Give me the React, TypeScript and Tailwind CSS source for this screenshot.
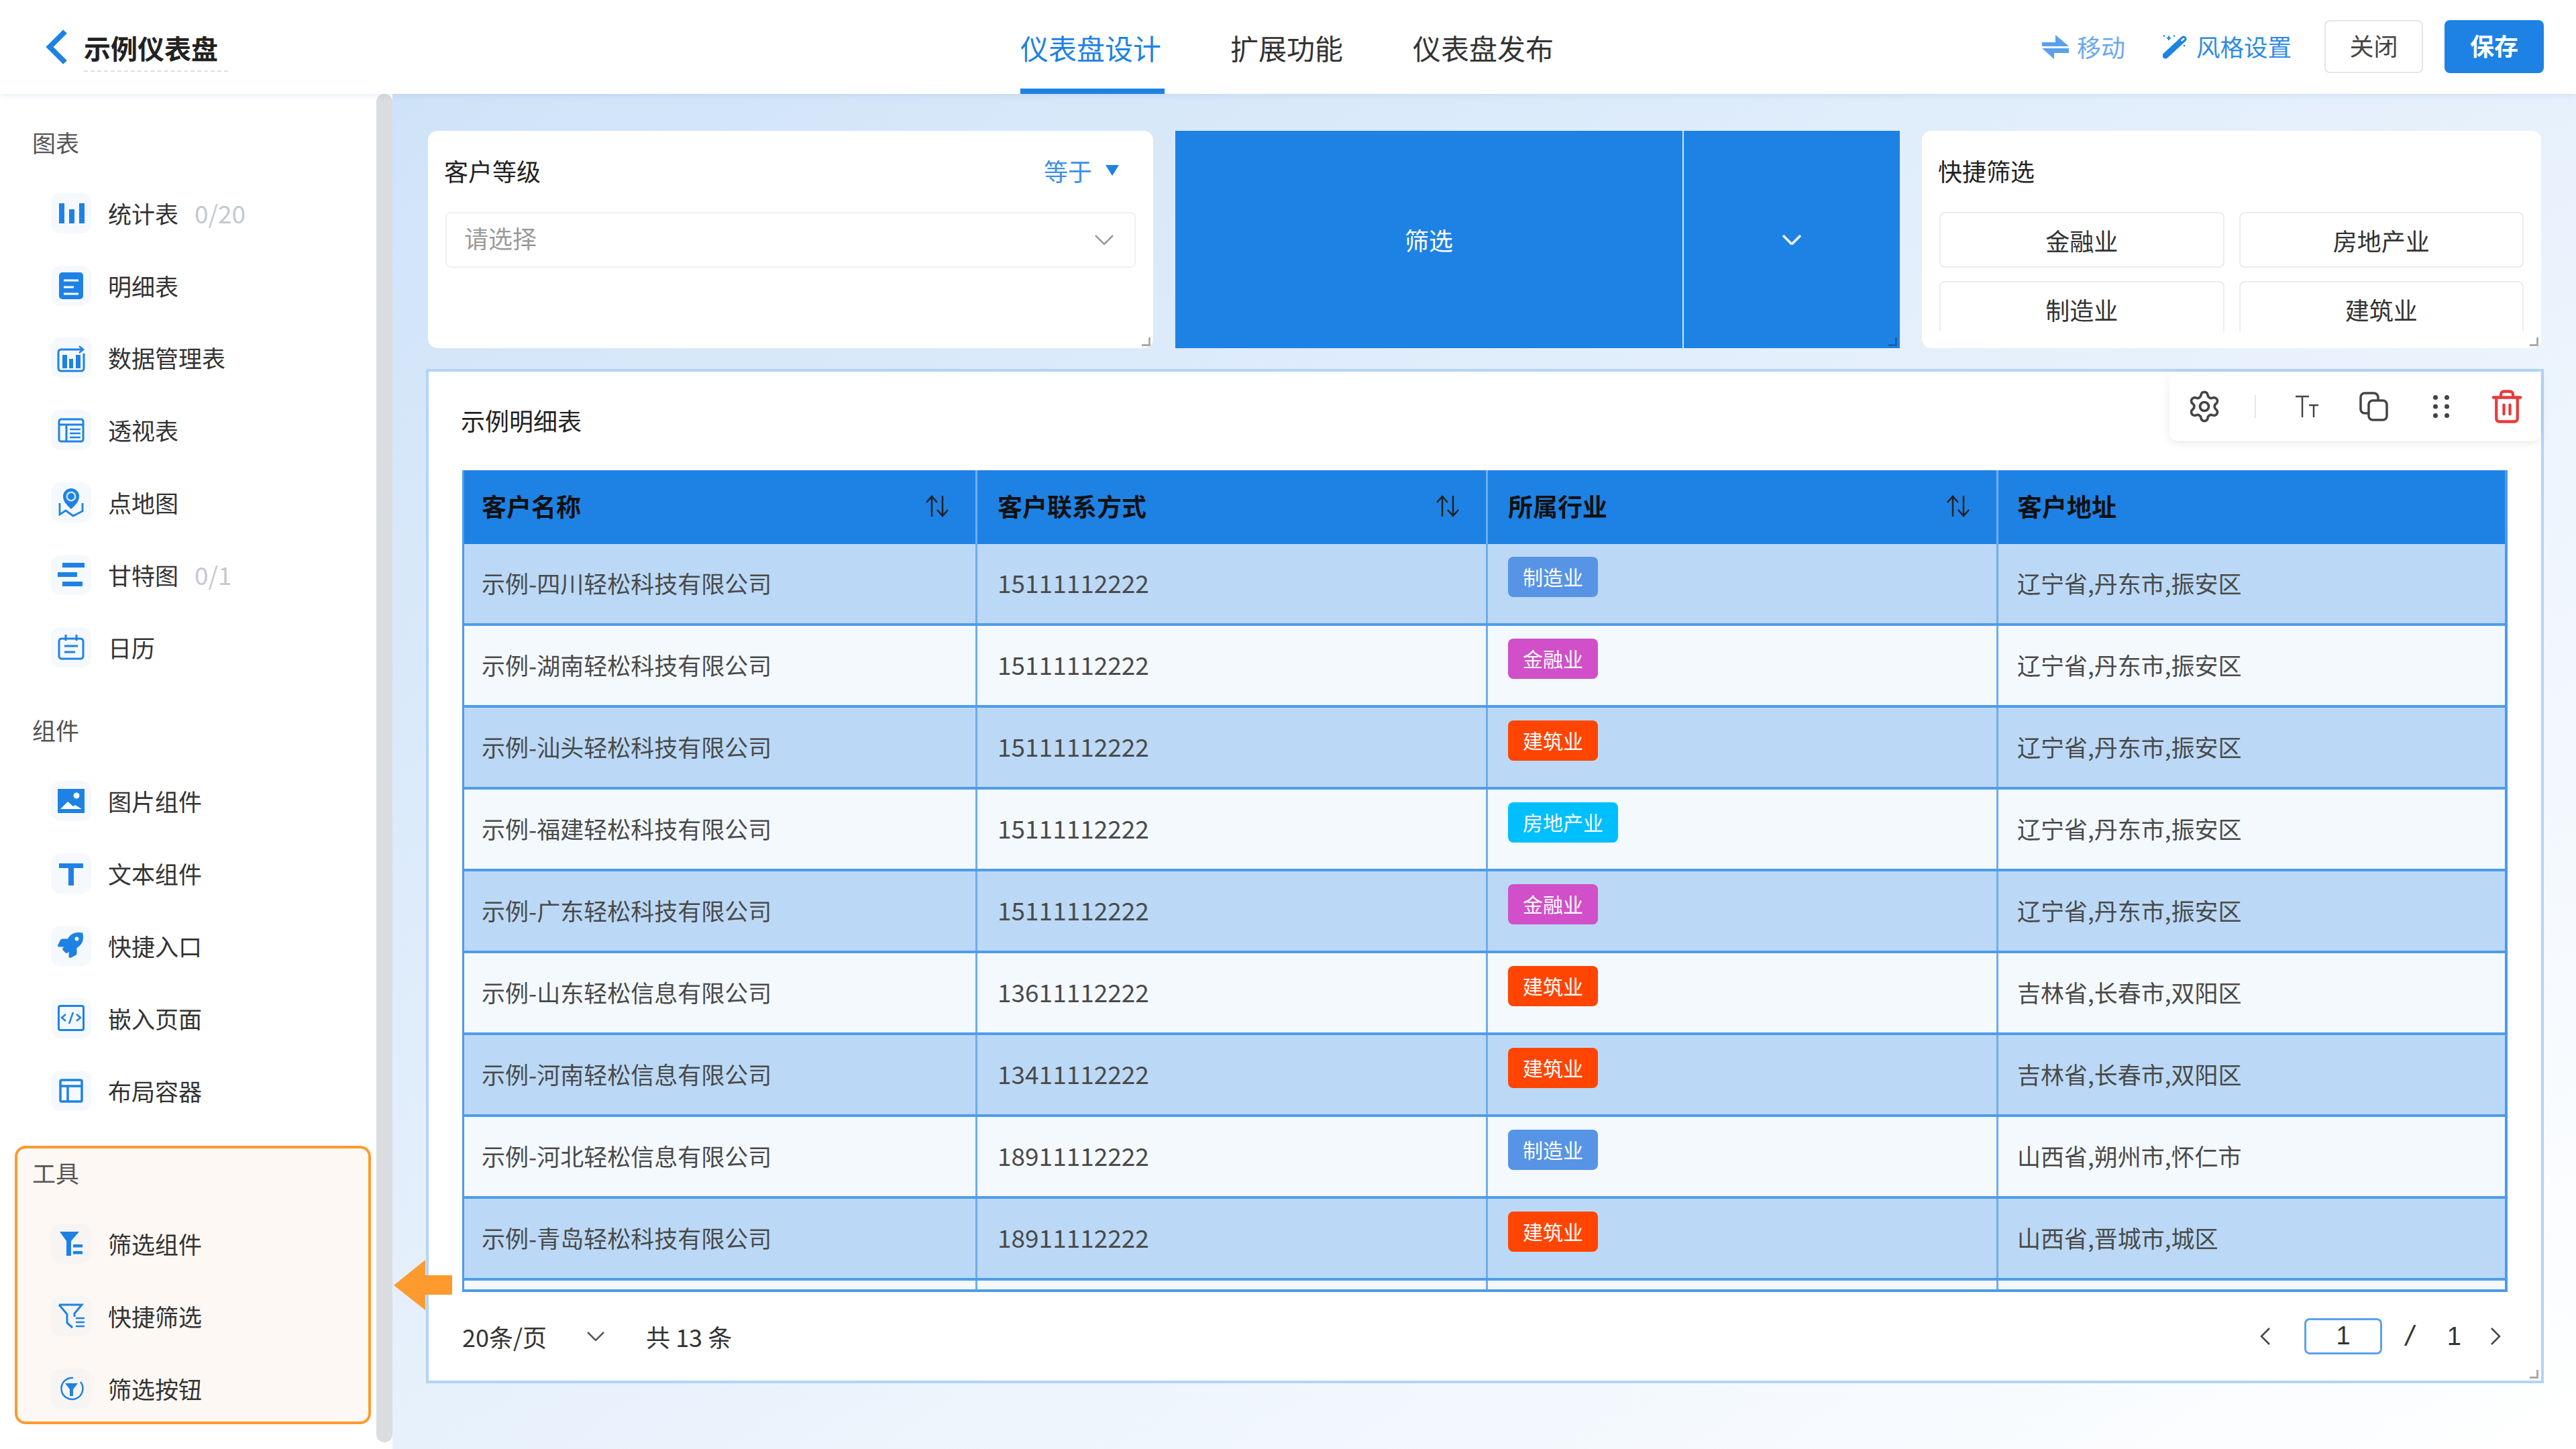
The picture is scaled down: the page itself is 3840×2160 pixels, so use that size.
import React from "react";
import { Settings, Trash2 } from "lucide-react";
import { FaRocket } from "react-icons/fa";

const B = "#1e82e4";

function Tile({ tools, children }: { tools?: boolean; children: React.ReactNode }) {
  return (
    <div className={`w-[60px] h-[60px] rounded-[14px] flex items-center justify-center shrink-0 ${tools ? "bg-[#f7f5f3]" : "bg-[#f5f9fe]"}`}>
      <svg width="60" height="60" viewBox="0 0 60 60" fill="none">{children}</svg>
    </div>
  );
}

const icons: Record<string, React.ReactNode> = {
  stat: (
    <g fill={B}>
      <rect x="12" y="15" width="8" height="30" />
      <rect x="27" y="24" width="8" height="21" />
      <rect x="42" y="15" width="8" height="30" />
    </g>
  ),
  detail: (
    <g>
      <rect x="12" y="10" width="36" height="40" rx="5" fill={B} />
      <path d="M19 22H41M19 32H34M19 42H41" stroke="#fff" strokeWidth="3" />
    </g>
  ),
  data: (
    <g>
      <path d="M47 18H15a4 4 0 0 0-4 4v24a4 4 0 0 0 4 4h30a4 4 0 0 0 4-4V24" stroke={B} strokeWidth="3" />
      <path d="M42 13l6 5-6 5" stroke={B} strokeWidth="2.5" />
      <rect x="17" y="26" width="7" height="20" fill={B} />
      <rect x="27" y="32" width="6" height="14" fill={B} />
      <rect x="37" y="26" width="7" height="20" fill={B} />
    </g>
  ),
  pivot: (
    <g stroke={B} strokeWidth="3">
      <rect x="12" y="14" width="36" height="33" rx="3" />
      <path d="M12 22H48M23 22V47" />
      <path d="M28 29H44M28 35H44M28 41H44" strokeWidth="2.5" />
    </g>
  ),
  map: (
    <g>
      <path d="M30 40C24 34 18 29 18 21a12 12 0 0 1 24 0C42 29 36 34 30 40Z" fill={B} />
      <circle cx="30" cy="21" r="7.5" fill="#cfe3f8" />
      <circle cx="30" cy="21" r="5" fill={B} />
      <path d="M13 31V48L22 42L33 50L47 43V31" stroke={B} strokeWidth="2.8" />
    </g>
  ),
  gantt: (
    <g fill={B}>
      <rect x="17" y="12" width="33" height="7" />
      <rect x="10" y="26" width="29" height="7" />
      <rect x="17" y="40" width="30" height="7" />
    </g>
  ),
  cal: (
    <g stroke={B} strokeWidth="3">
      <rect x="12" y="17" width="36" height="30" rx="4" />
      <path d="M22 11V20M38 11V20M20 28H40M20 37H36" />
    </g>
  ),
  img: (
    <g>
      <rect x="10" y="12" width="40" height="36" fill={B} />
      <circle cx="38" cy="22" r="4.5" fill="#fff" />
      <path d="M14 42l11-11 8 7 3-2 10 6Z" fill="#fff" />
    </g>
  ),
  text: <path d="M12 15H48V22H34V48H26V22H12Z" fill={B} />,
  rocket: (
    <foreignObject x="10" y="10" width="40" height="40">
      <FaRocket size={38} color={B} />
    </foreignObject>
  ),
  code: (
    <g stroke={B}>
      <rect x="11.5" y="11.5" width="37" height="36" rx="2.5" strokeWidth="3" />
      <path d="M22 24l-6 5 6 5M38 24l6 5-6 5M33 21l-6 17" strokeWidth="2.5" />
    </g>
  ),
  layout: (
    <g stroke={B} strokeWidth="3.5">
      <rect x="14" y="14" width="32" height="32" rx="2" />
      <path d="M14 23H46M25 23V46" />
    </g>
  ),
  filter: (
    <g fill={B}>
      <path d="M13 12H42L30 26V48H23V26Z" />
      <rect x="33" y="31" width="14" height="4.5" />
      <rect x="33" y="41" width="14" height="4.5" />
    </g>
  ),
  quick: (
    <g stroke={B}>
      <path d="M12 13H46L35 26V31M32 47L24 40V27L12 13" strokeWidth="3" />
      <path d="M37 33H50M37 39H50M37 45H50" strokeWidth="2.5" />
    </g>
  ),
  btn: (
    <g>
      <path d="M44 20A16 16 0 1 1 33 14" stroke={B} strokeWidth="2.5" />
      <path d="M21 22H40L33 31V41H28V31Z" fill={B} />
    </g>
  ),
};

function Item({ icon, label, count, tools }: { icon: string; label: string; count?: string; tools?: boolean }) {
  return (
    <div className={`h-[107.8px] flex items-center ${tools ? "pl-[50px]" : "pl-[76px]"}`}>
      <Tile tools={tools}>{icons[icon]}</Tile>
      <span className="ml-[25px] pb-[1px] text-[35px] leading-none text-[#333]">{label}</span>
      {count && <span className="ml-[24px] pb-[1px] text-[37px] leading-none text-[#c4c9d0]">{count}</span>}
    </div>
  );
}

function Handle({ dark }: { dark?: boolean }) {
  return (
    <div className={`absolute right-[4px] bottom-[3px] w-[13px] h-[13px] border-r-[3px] border-b-[3px] ${dark ? "border-[#1363b4]" : "border-[#aaa]"}`} />
  );
}

function Chevron({ w, h, color, sw = 2.5 }: { w: number; h: number; color: string; sw?: number }) {
  return (
    <svg width={w} height={h} viewBox={`0 0 ${w} ${h}`} fill="none">
      <path d={`M1 1L${w / 2} ${h - 1}L${w - 1} 1`} stroke={color} strokeWidth={sw} />
    </svg>
  );
}

function SortIcon() {
  return (
    <svg width="36" height="33" viewBox="0 0 36 33" fill="none" stroke="#222" strokeWidth="2.5">
      <path d="M10 32V2M2 11l8-9 8 9" />
      <path d="M26 1V31M18 22l8 9 8-9" />
    </svg>
  );
}

const tags: Record<string, string> = {
  制造业: "bg-[#5794e6]",
  金融业: "bg-[#d14fc8]",
  建筑业: "bg-[#ff4500]",
  房地产业: "bg-[#00bfff]",
};

const rows = [
  ["示例-四川轻松科技有限公司", "15111112222", "制造业", "辽宁省,丹东市,振安区"],
  ["示例-湖南轻松科技有限公司", "15111112222", "金融业", "辽宁省,丹东市,振安区"],
  ["示例-汕头轻松科技有限公司", "15111112222", "建筑业", "辽宁省,丹东市,振安区"],
  ["示例-福建轻松科技有限公司", "15111112222", "房地产业", "辽宁省,丹东市,振安区"],
  ["示例-广东轻松科技有限公司", "15111112222", "金融业", "辽宁省,丹东市,振安区"],
  ["示例-山东轻松信息有限公司", "13611112222", "建筑业", "吉林省,长春市,双阳区"],
  ["示例-河南轻松信息有限公司", "13411112222", "建筑业", "吉林省,长春市,双阳区"],
  ["示例-河北轻松信息有限公司", "18911112222", "制造业", "山西省,朔州市,怀仁市"],
  ["示例-青岛轻松科技有限公司", "18911112222", "建筑业", "山西省,晋城市,城区"],
];

const gridCols = "grid grid-cols-[765px_761px_761px_1fr]";

function HeadCell({ label, sort }: { label: string; sort?: boolean }) {
  return (
    <div className="flex items-center justify-between pl-[30px] first:pl-[26px] last:pl-[28px] pr-[39px] pb-[3px] border-r-[3px] border-[#6eadf0] last:border-r-0">
      <span className="text-[37px] leading-none font-bold text-[#111]">{label}</span>
      {sort && <SortIcon />}
    </div>
  );
}

function Row({ r, i }: { r: string[]; i: number }) {
  const cell = "border-r-[3px] border-[#6eadf0] leading-none text-[#4a4a4a]";
  return (
    <div className={`${gridCols} h-[122px] border-b-[4px] border-[#4f9cea] ${i % 2 === 0 ? "bg-[#bbd9f6]" : "bg-[#f4f9fe]"}`}>
      <div className={`${cell} pl-[26px] text-[35px] pb-[4px] flex items-center`}>{r[0]}</div>
      <div className={`${cell} pl-[30px] text-[37px] pb-[4px] flex items-center`}>{r[1]}</div>
      <div className={`${cell} pl-[30px] pt-[19px]`}>
        <span className={`inline-flex h-[60px] px-[22px] pb-[3px] items-center rounded-[8px] text-[30px] text-white ${tags[r[2]]}`}>{r[2]}</span>
      </div>
      <div className="pl-[28px] pb-[4px] flex items-center text-[35px] leading-none text-[#4a4a4a]">{r[3]}</div>
    </div>
  );
}

export default function App() {
  return (
    <div className="relative w-[3840px] h-[2160px] overflow-hidden flex flex-col bg-white font-['Noto_Sans_CJK_SC','Noto_Sans',sans-serif]">
      {/* top bar */}
      <header className="relative z-10 h-[140px] shrink-0 flex bg-white shadow-[0_2px_10px_rgba(60,110,170,0.12)]">
        <div className="w-[1521px] flex items-center pl-[68px]">
          <svg width="33" height="54" viewBox="0 0 33 54" fill="none">
            <path d="M29 4L6 27L29 50" stroke={B} strokeWidth="8" />
          </svg>
          <div className="ml-[24px] w-[215px] h-[70px] mt-[4px] border-b-2 border-dashed border-[#ddd] text-[40px] leading-[68px] font-semibold text-[#222]">
            示例仪表盘
          </div>
        </div>
        <nav className="flex text-[42px] text-[#333]">
          <div className="w-[215px] mr-[98px] pt-[8px] border-b-[8px] border-[#1e82e4] flex items-center text-[#1e82e4]">仪表盘设计</div>
          <div className="mr-[104px] flex items-center">扩展功能</div>
          <div className="flex items-center">仪表盘发布</div>
        </nav>
        <div className="ml-auto pr-[48px] flex items-center">
          <svg width="40" height="36" viewBox="0 0 40 36" fill="#5ba0ea">
            <path d="M0 11H20V0L40 17H0Z M0 20H40V27H18V36Z" />
          </svg>
          <span className="ml-[12px] pb-[2px] text-[36px] leading-none text-[#6aa9ec]">移动</span>
          <svg className="ml-[56px]" width="36" height="36" viewBox="0 0 36 36" fill="none">
            <path d="M4 31L31 6" stroke={B} strokeWidth="9" strokeLinecap="round" />
            <path d="M27.5 9L32 5" stroke="#fff" strokeWidth="2.5" />
            <path d="M9 1.5V8M6 4.8H12" stroke={B} strokeWidth="2" />
            <circle cx="2" cy="1.5" r="1.3" fill={B} />
            <circle cx="17" cy="1.5" r="1.3" fill={B} />
            <circle cx="32" cy="16" r="1.3" fill={B} />
          </svg>
          <span className="ml-[14px] pb-[2px] text-[35.5px] leading-none text-[#2d8ae6]">风格设置</span>
          <div className="ml-[49px] w-[147px] h-[79px] mb-[2px] pb-[5px] rounded-[8px] border-2 border-[#e4e6ea] flex items-center justify-center text-[36px] text-[#444]">关闭</div>
          <div className="ml-[32px] w-[148px] h-[79px] mb-[2px] pb-[5px] rounded-[8px] bg-[#1e82e4] flex items-center justify-center text-[36px] text-white font-semibold">保存</div>
        </div>
      </header>

      <div className="flex-1 flex min-h-0">
        {/* sidebar */}
        <aside className="w-[561px] shrink-0 bg-white pt-[49px]">
          <div className="h-[50px] mb-[25px] pl-[48px] pb-[4px] flex items-center text-[35px] text-[#555]">图表</div>
          <Item icon="stat" label="统计表" count="0/20" />
          <Item icon="detail" label="明细表" />
          <Item icon="data" label="数据管理表" />
          <Item icon="pivot" label="透视表" />
          <Item icon="map" label="点地图" />
          <Item icon="gantt" label="甘特图" count="0/1" />
          <Item icon="cal" label="日历" />
          <div className="h-[50px] mt-[45px] mb-[27px] pl-[48px] pb-[1px] flex items-center text-[35px] text-[#555]">组件</div>
          <Item icon="img" label="图片组件" />
          <Item icon="text" label="文本组件" />
          <Item icon="rocket" label="快捷入口" />
          <Item icon="code" label="嵌入页面" />
          <Item icon="layout" label="布局容器" />
          <div className="ml-[22px] mt-[28px] w-[531px] h-[415px] rounded-[16px] border-[4px] border-[#ff9a2e] bg-[#fdf8f3] pt-[14px]">
            <div className="h-[50px] mb-[25px] pl-[22px] pb-[4px] flex items-center text-[35px] text-[#555]">工具</div>
            <Item tools icon="filter" label="筛选组件" />
            <Item tools icon="quick" label="快捷筛选" />
            <Item tools icon="btn" label="筛选按钮" />
          </div>
        </aside>
        <div className="w-[24px] shrink-0 bg-white pb-[10px]">
          <div className="h-full rounded-[12px] bg-[#dadce0]" />
        </div>

        {/* main */}
        <main className="flex-1 min-w-0 pt-[55px] pl-[53px] pr-[48px] bg-gradient-to-br from-[#cfe3f8] to-[#ffffff]">
          <div className="flex h-[324px] pr-[4px]">
            <section className="relative w-[1081px] rounded-[14px] bg-white px-[26px] pt-[34px]">
              <div className="h-[50px] flex items-center justify-between">
                <span className="-ml-[2px] text-[36px] leading-none text-[#222]">客户等级</span>
                <span className="flex items-center pr-[25px] text-[36px] leading-none text-[#3a90e8]">
                  等于
                  <svg className="ml-[20px]" width="20" height="16" viewBox="0 0 20 16"><path d="M0 0H20L10 16Z" fill={B} /></svg>
                </span>
              </div>
              <div className="mt-[37px] h-[83px] rounded-[8px] border-2 border-[#f0f1f3] flex items-center justify-between pl-[26px] pr-[31px]">
                <span className="pb-[7px] text-[36px] leading-none text-[#9a9a9a]">请选择</span>
                <Chevron w={28} h={15} color="#999" />
              </div>
              <Handle />
            </section>
            <section className="relative ml-[33px] w-[1080px] bg-[#1e82e4] flex text-white">
              <div className="w-[758px] flex items-center justify-center border-r-2 border-[#cfe3f8] text-[36px]">筛选</div>
              <div className="flex-1 flex items-center justify-center">
                <Chevron w={28} h={15} color="#fff" sw={3.5} />
              </div>
              <Handle dark />
            </section>
            <section className="relative ml-[33px] flex-1 rounded-[14px] bg-white px-[26px] pt-[34px]">
              <div className="-ml-[2px] h-[50px] mb-[37px] flex items-center text-[36px] leading-none text-[#222]">快捷筛选</div>
              <div className="h-[178px] overflow-hidden grid grid-cols-2 gap-x-[22px] gap-y-[20px] content-start">
                {["金融业", "房地产业", "制造业", "建筑业"].map((t) => (
                  <div key={t} className="h-[83px] rounded-[8px] border-2 border-[#ececf0] flex items-center justify-center text-[36px] text-[#333]">{t}</div>
                ))}
              </div>
              <Handle />
            </section>
          </div>

          <section className="relative -ml-[3px] mt-[31px] h-[1512px] border-[4px] border-[#b3d4f6] bg-white px-[50px] pt-[47px]">
            <div className="h-[50px] flex items-center text-[36px] leading-none text-[#222] -ml-[2px]">示例明细表</div>
            <div className="mt-[50px] h-[1225px] overflow-hidden border-l-[3px] border-r-[4px] border-b-[4px] border-[#4d9be9] bg-[#f4f9fe]">
              <div className={`${gridCols} h-[110px] bg-[#1e82e4]`}>
                <HeadCell label="客户名称" sort />
                <HeadCell label="客户联系方式" sort />
                <HeadCell label="所属行业" sort />
                <HeadCell label="客户地址" />
              </div>
              {rows.map((r, i) => (
                <Row key={i} r={r} i={i} />
              ))}
              <div className={`${gridCols} h-[122px]`}>
                <div className="border-r-[3px] border-[#6eadf0]" />
                <div className="border-r-[3px] border-[#6eadf0]" />
                <div className="border-r-[3px] border-[#6eadf0]" />
                <div />
              </div>
            </div>
            <footer className="h-[133px] pb-[1px] flex items-center text-[36px] leading-none text-[#333]">
              <span>20条/页</span>
              <span className="ml-[60px]"><Chevron w={26} h={14} color="#555" /></span>
              <span className="ml-[62px]">共 13 条</span>
              <div className="ml-auto flex items-center">
                <svg width="15" height="26" viewBox="0 0 15 26" fill="none"><path d="M14 1L2 13L14 25" stroke="#444" strokeWidth="2.5" /></svg>
                <div className="ml-[51px] w-[116px] h-[54px] pb-[2px] rounded-[8px] border-[3px] border-[#5aa2ee] flex items-center justify-center text-[38px] font-['Liberation_Sans']">1</div>
                <span className="ml-[35px] italic text-[42px] font-['Liberation_Sans']">/</span>
                <span className="ml-[50px] text-[38px] font-['Liberation_Sans']">1</span>
                <svg className="ml-[44px] mr-[10px]" width="15" height="26" viewBox="0 0 15 26" fill="none"><path d="M1 1L13 13L1 25" stroke="#444" strokeWidth="2.5" /></svg>
              </div>
            </footer>
            <Handle />
            {/* floating toolbar */}
            <div className="absolute top-0 right-[1px] w-[553px] h-[103px] rounded-[10px] bg-white shadow-[0_4px_14px_rgba(0,0,0,0.08)] flex items-center pl-[26px]">
              <Settings size={52} strokeWidth={1.7} className="text-[#444]" />
              <div className="ml-[49px] w-[2px] h-[34px] bg-[#e8e8e8]" />
              <svg className="ml-[59px]" width="34" height="34" viewBox="0 0 34 34" fill="none" stroke="#444" strokeWidth="2.5">
                <path d="M0 2H20M10 2V33M20 15H34M27 15V33" />
              </svg>
              <svg className="ml-[61px]" width="43" height="44" viewBox="0 0 43 44" fill="none" stroke="#444" strokeWidth="3.5">
                <path d="M13 32H8a6 6 0 0 1-6-6V8a6 6 0 0 1 6-6h14a7 7 0 0 1 6 6v4" />
                <rect x="14" y="13" width="27" height="29" rx="6" />
              </svg>
              <svg className="ml-[67px]" width="24" height="34" viewBox="0 0 24 34" fill="#444">
                <circle cx="3.5" cy="3.5" r="3.5" /><circle cx="20.5" cy="3.5" r="3.5" />
                <circle cx="3.5" cy="17" r="3.5" /><circle cx="20.5" cy="17" r="3.5" />
                <circle cx="3.5" cy="30.5" r="3.5" /><circle cx="20.5" cy="30.5" r="3.5" />
              </svg>
              <Trash2 size={54} strokeWidth={1.9} className="ml-[59px] text-[#e83b3b]" />
            </div>
          </section>
        </main>
      </div>

      {/* pointer arrow */}
      <svg className="absolute left-[587px] top-[1878px]" width="87" height="75" viewBox="0 0 87 75">
        <path d="M0 38L47 0V23H87V52H47V75Z" fill="#ff9a2e" />
      </svg>
    </div>
  );
}
